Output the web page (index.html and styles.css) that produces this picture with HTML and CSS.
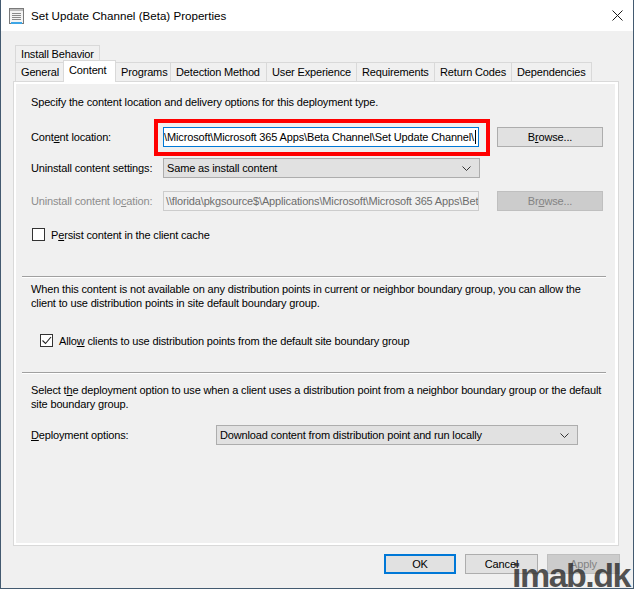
FILE: index.html
```html
<!DOCTYPE html>
<html lang="en">
<head>
  <meta charset="UTF-8" />
  <title>Set Update Channel (Beta) Properties</title>
  <link rel="stylesheet" href="styles.css">
</head>
<body>
  <div class="window">
    <div class="titlebar">
      <svg class="app-icon" width="15" height="17" viewBox="0 0 15 17">
        <rect x="0.5" y="0.5" width="14" height="15" fill="#f4f4f4" stroke="#7a7a7a"/>
        <rect x="1" y="1" width="13" height="2" fill="#bdbdbd"/>
        <path d="M3 5.5h9M3 7.5h9M3 9.5h9M3 11.5h9" stroke="#8a8a8a"/>
        <rect x="2" y="14" width="11" height="2" fill="#3ea6e6"/>
      </svg>
      <span class="title">Set Update Channel (Beta) Properties</span>
      <svg class="close" width="11" height="11" viewBox="0 0 11 11">
        <path d="M0.5 0.5l10 10M10.5 0.5l-10 10" stroke="#1a1a1a" stroke-width="1"/>
      </svg>
    </div>

    <div class="dialog">
      <div class="tabs">
        <div class="tab-row">
          <div class="tab tab-back">Install Behavior</div>
        </div>
        <div class="tab-row">
          <div class="tab t-general">General</div>
          <div class="tab t-content active">Content</div>
          <div class="tab t-programs">Programs</div>
          <div class="tab t-detection">Detection Method</div>
          <div class="tab t-ux">User Experience</div>
          <div class="tab t-req">Requirements</div>
          <div class="tab t-return">Return Codes</div>
          <div class="tab t-deps">Dependencies</div>
        </div>
      </div>

      <div class="pane">
        <div class="page">
          <p class="intro">Specify the content location and delivery options for this deployment type.</p>

          <div class="row row-location">
            <span class="label">Cont<u>e</u>nt location:</span>
            <div class="field-wrap highlight">
              <div class="field focused"><span>\\florida\pkgsource$\Applications\Microsoft\Microsoft 365 Apps\Beta Channel\Set Update Channel\</span><i class="caret"></i></div>
            </div>
            <button class="btn browse">B<u>r</u>owse...</button>
          </div>

          <div class="row row-settings">
            <span class="label">Uninstall content settin<u>g</u>s:</span>
            <div class="combo"><span>Same as install content</span><svg class="chev" width="9" height="5" viewBox="0 0 9 5"><path d="M0.5 0.5l4 4 4-4" fill="none" stroke="#333"/></svg></div>
          </div>

          <div class="row row-uninstall">
            <span class="label disabled">Uninstall content lo<u>c</u>ation:</span>
            <div class="field disabled-field"><span>\\florida\pkgsource$\Applications\Microsoft\Microsoft 365 Apps\Beta Channel\Set Update Channel\</span></div>
            <button class="btn browse disabled-btn">Br<u>o</u>wse...</button>
          </div>

          <label class="check check-persist">
            <span class="box"></span>
            <span>P<u>e</u>rsist content in the client cache</span>
          </label>

          <div class="sep sep-first"></div>

          <p class="para para-fallback">When this content is not available on any distribution points in current or neighbor boundary group, you can allow the<br>client to use distribution points in site default boundary group.</p>

          <label class="check check-allow">
            <span class="box"><svg width="11" height="11" viewBox="0 0 11 11"><path d="M1.5 5.5l3 3 5.5-6.5" fill="none" stroke="#222" stroke-width="1.1"/></svg></span>
            <span>Allo<u>w</u> clients to use distribution points from the default site boundary group</span>
          </label>

          <div class="sep sep-second"></div>

          <p class="para para-deploy">Select t<u>h</u>e deployment option to use when a client uses a distribution point from a neighbor boundary group or the default<br>site boundary group.</p>

          <div class="row row-deploy">
            <span class="label deploy-label"><u>D</u>eployment options:</span>
            <div class="combo combo-deploy"><span>Download content from distribution point and run locally</span><svg class="chev" width="9" height="5" viewBox="0 0 9 5"><path d="M0.5 0.5l4 4 4-4" fill="none" stroke="#333"/></svg></div>
          </div>
        </div>
      </div>

      <div class="buttons">
        <button class="btn action default">OK</button>
        <button class="btn action">Cancel</button>
        <button class="btn action disabled-btn">Apply</button>
      </div>
    </div>

    <div class="watermark">imab.dk</div>
  </div>
</body>
</html>
```

FILE: styles.css
```css
* { box-sizing: border-box; }
body { margin: 0; background: #f0f0f0; font-family: "Liberation Sans", Arial, sans-serif; font-size: 11px; letter-spacing: -0.15px; color: #000; }
u { text-decoration: underline; text-underline-offset: 1px; }
p { margin: 0; }

.window { position: relative; width: 634px; height: 589px; background: #f0f0f0; border: 1px solid #435a70; border-top: none; overflow: hidden; }

.titlebar { height: 31px; background: #fff; display: flex; align-items: center; padding-left: 8px; }
.app-icon { margin-top: 1px; }
.title { margin-left: 7px; font-size: 11.6px; letter-spacing: 0; }
.close { margin-left: auto; margin-right: 10px; }

.dialog { padding: 14px 12px 0 12px; }

.tabs { padding-left: 2px; }
.tab-row { display: flex; }
.tab { height: 19px; line-height: 18px; padding: 0 5px; border: 1px solid #d9d9d9; border-bottom: none; background: #f0f0f0; margin-left: -1px; white-space: nowrap; }
.tab:first-child { margin-left: 0; }
.tab-back { height: 17px; line-height: 16px; width: 85px; }
.t-general { width: 49px; }
.t-content { width: 53px; }
.t-programs { width: 56px; }
.t-detection { width: 97px; }
.t-ux { width: 91px; }
.t-req { width: 79px; }
.t-return { width: 78px; }
.t-deps { width: 81px; }
.tab.active { background: #fff; height: 22px; margin-top: -2px; margin-bottom: -1px; position: relative; z-index: 1; line-height: 19px; }

.pane { width: 606px; height: 465px; border: 1px solid #d9d9d9; background: #fff; padding: 2px 3px 2px 2px; }
.page { height: 100%; background: #f0f0f0; padding: 12px 0 0 15px; }

.row { display: flex; align-items: center; height: 20px; }
.label { width: 132px; white-space: nowrap; }
.label.disabled { color: #8d8d8d; }
.row-location { margin-top: 19px; }
.row-settings { margin-top: 11px; }
.row-uninstall { margin-top: 13px; }
.row-deploy { margin-top: 14px; }
.deploy-label { width: 185px; }

.field-wrap { position: relative; }
.highlight::after { content: ""; position: absolute; left: -9px; right: -11px; top: -8px; bottom: -9px; border: 4px solid #ff0000; }
.field { width: 316px; height: 20px; display: flex; align-items: center; overflow: hidden; white-space: nowrap; padding: 0 2px; border: 1px solid #7a7a7a; background: #fff; }
.field.focused { justify-content: flex-end; border-color: #0078d7; }
.caret { flex: none; width: 1px; height: 14px; background: #000; margin-left: 1px; }
.disabled-field { background: #f0f0f0; border-color: #cccccc; color: #6d6d6d; }

.combo { width: 317px; height: 20px; display: flex; align-items: center; padding: 0 8px 0 3px; background: #e1e1e1; border: 1px solid #adadad; }
.combo-deploy { width: 362px; }
.chev { margin-left: auto; }

.btn { font: inherit; letter-spacing: inherit; color: #000; background: #e1e1e1; border: 1px solid #adadad; height: 20px; padding: 0; }
.browse { width: 106px; margin-left: 18px; }
.disabled-btn { background: #cccccc; border-color: #bfbfbf; color: #838383; }

.check { display: flex; align-items: center; height: 13px; white-space: nowrap; }
.box { width: 13px; height: 13px; border: 1px solid #333; background: #fff; margin-right: 6px; display: flex; align-items: center; justify-content: center; }
.check-persist { margin-top: 17px; margin-left: 1px; }
.check-allow { margin-top: 24px; margin-left: 9px; }

.sep { width: 584px; margin-left: -9px; border-top: 1px solid #a0a0a0; border-bottom: 1px solid #fff; }
.sep-first { margin-top: 35px; }
.sep-second { margin-top: 25px; }

.para { line-height: 14px; white-space: nowrap; }
.para-fallback { margin-top: 4px; }
.para-deploy { margin-top: 9px; }

.buttons { display: flex; justify-content: flex-end; gap: 9px; margin-top: 8px; padding-right: 1px; }
.action { width: 73px; }
.default { border: 2px solid #0078d7; width: 72px; }

.watermark { position: absolute; right: 3px; bottom: -7px; font-weight: bold; font-size: 34px; letter-spacing: -1.5px; color: rgba(45, 45, 45, 0.82); }
```
